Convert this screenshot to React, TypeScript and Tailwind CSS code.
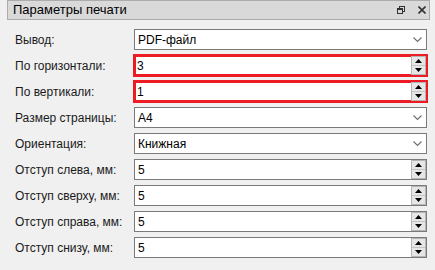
import React from 'react';

type Row = {
  label: string;
  value: string;
  kind: 'select' | 'spin';
  highlight?: boolean;
};

const rows: Row[] = [
  { label: 'Вывод:', value: 'PDF-файл', kind: 'select' },
  { label: 'По горизонтали:', value: '3', kind: 'spin', highlight: true },
  { label: 'По вертикали:', value: '1', kind: 'spin', highlight: true },
  { label: 'Размер страницы:', value: 'A4', kind: 'select' },
  { label: 'Ориентация:', value: 'Книжная', kind: 'select' },
  { label: 'Отступ слева, мм:', value: '5', kind: 'spin' },
  { label: 'Отступ сверху, мм:', value: '5', kind: 'spin' },
  { label: 'Отступ справа, мм:', value: '5', kind: 'spin' },
  { label: 'Отступ снизу, мм:', value: '5', kind: 'spin' },
];

function Chevron() {
  return (
    <svg width="9" height="6" viewBox="0 0 9 6" className="mr-[4px] shrink-0">
      <path d="M0.5 0.5 L4.5 4.5 L8.5 0.5" fill="none" stroke="#6e6e6e" strokeWidth="1.1" />
    </svg>
  );
}

function Spinner() {
  return (
    <div className="flex h-full w-[15px] shrink-0 flex-col border border-[#b5b5b5] bg-[#e6e6e6]">
      <div className="flex flex-1 items-center justify-center border-b border-[#c4c4c4]">
        <svg width="7" height="4" viewBox="0 0 7 4">
          <path d="M3.5 0 L7 4 L0 4 Z" fill="#000" />
        </svg>
      </div>
      <div className="flex flex-1 items-center justify-center">
        <svg width="7" height="4" viewBox="0 0 7 4">
          <path d="M0 0 L7 0 L3.5 4 Z" fill="#000" />
        </svg>
      </div>
    </div>
  );
}

function Field({ row }: { row: Row }) {
  const frame = row.highlight
    ? 'border-[#ed1c24] shadow-[0_0_0_1px_#ed1c24,inset_0_0_0_1px_#ed1c24]'
    : 'border-[#7a7a7a]';
  return (
    <div className={`flex h-[21px] items-center border bg-white ${frame}`}>
      <span className={`flex-1 text-[12px] leading-none text-black ${row.highlight ? 'pl-[2px]' : 'pl-[3px]'}`}>
        {row.value}
      </span>
      {row.kind === 'select' ? <Chevron /> : <Spinner />}
    </div>
  );
}

export default function App() {
  return (
    <div className="h-[270px] w-[435px] overflow-hidden bg-[#f0f0f0] font-['Liberation_Sans',Arial,sans-serif] text-[#1a1a1a]">
      <div className="ml-[7px] mr-[5px] flex h-[20px] items-center border border-[#acacac] bg-[#d9d9d9] pl-[5px] pr-[2px]">
        <span className="flex-1 text-[13px] text-black">Параметры печати</span>
        <svg width="8" height="8" viewBox="0 0 8 8" className="mr-[13px]">
          <rect x="2.5" y="0.5" width="5" height="5" fill="none" stroke="#333" />
          <rect x="0.5" y="2.5" width="5" height="5" fill="#d9d9d9" stroke="#333" />
          <line x1="0" y1="3.5" x2="6" y2="3.5" stroke="#333" />
        </svg>
        <svg width="8" height="8" viewBox="0 0 8 8" className="mr-[1px]">
          <path d="M0.5 0.5 L7.5 7.5 M7.5 0.5 L0.5 7.5" stroke="#333" strokeWidth="1.6" />
        </svg>
      </div>
      <div className="grid grid-cols-[119px_293px] gap-y-[5px] pl-[15px] pt-[9px]">
        {rows.map((row) => (
          <React.Fragment key={row.label}>
            <div className="flex h-[21px] items-center text-[12px]">{row.label}</div>
            <Field row={row} />
          </React.Fragment>
        ))}
      </div>
    </div>
  );
}
